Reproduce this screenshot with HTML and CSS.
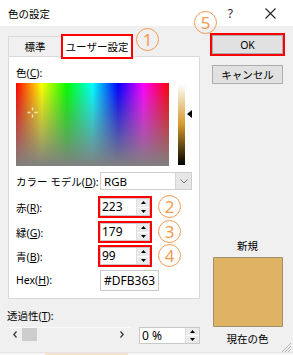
FILE: index.html
```html
<!DOCTYPE html>
<html lang="ja">
<head>
<meta charset="utf-8">
<link rel="stylesheet" href="styles.css">
</head>
<body>
<div class="window">
  <header class="titlebar">
    <span class="title">色の設定</span>
    <span class="help">?</span>
    <svg class="close" width="11" height="11" viewBox="0 0 11 11"><path d="M0.5 0.5L10.5 10.5M10.5 0.5L0.5 10.5" stroke="#222" stroke-width="1.1" fill="none"/></svg>
  </header>
  <div class="main">
    <div class="left">
      <div class="tabs">
        <div class="tab">標準</div>
        <div class="tab active">ユーザー設定<span class="mark mark1">1</span></div>
      </div>
      <div class="panel">
        <div class="lbl-color">色(<u>C</u>):</div>
        <div class="picker">
          <div class="spectrum">
            <svg class="cross" width="11" height="11" viewBox="0 0 11 11"><path d="M5.5 0.5V3.5M5.5 7.5V10.5M0.5 5.5H3.5M7.5 5.5H10.5" stroke="#fbe9c9" stroke-width="1.4" fill="none"/></svg>
          </div>
          <div class="lum"></div>
          <svg class="lum-arrow" width="5" height="8" viewBox="0 0 5 8"><path d="M0 4L5 0V8Z" fill="#000"/></svg>
        </div>
        <div class="fields">
          <div class="row row-select">
            <span class="lbl">カラー モデル(<u>D</u>):</span>
            <div class="select"><span class="sel-val">RGB</span><span class="drop"><svg width="8" height="5" viewBox="0 0 8 5"><path d="M0.5 0.5L4 4L7.5 0.5" stroke="#777" fill="none"/></svg></span></div>
          </div>
          <div class="row row-r">
            <span class="lbl">赤(<u>R</u>):</span>
            <div class="spin boxed"><span class="val">223</span><span class="arrows"><span class="up"><svg width="5" height="3" viewBox="0 0 5 3"><path d="M2.5 0L5 3H0Z" fill="#000"/></svg></span><span class="down"><svg width="5" height="3" viewBox="0 0 5 3"><path d="M0 0H5L2.5 3Z" fill="#000"/></svg></span></span></div>
            <span class="mark mark-row">2</span>
          </div>
          <div class="row row-g">
            <span class="lbl">緑(<u>G</u>):</span>
            <div class="spin boxed"><span class="val">179</span><span class="arrows"><span class="up"><svg width="5" height="3" viewBox="0 0 5 3"><path d="M2.5 0L5 3H0Z" fill="#000"/></svg></span><span class="down"><svg width="5" height="3" viewBox="0 0 5 3"><path d="M0 0H5L2.5 3Z" fill="#000"/></svg></span></span></div>
            <span class="mark mark-row">3</span>
          </div>
          <div class="row row-b">
            <span class="lbl">青(<u>B</u>):</span>
            <div class="spin boxed"><span class="val">99</span><span class="arrows"><span class="up"><svg width="5" height="3" viewBox="0 0 5 3"><path d="M2.5 0L5 3H0Z" fill="#000"/></svg></span><span class="down"><svg width="5" height="3" viewBox="0 0 5 3"><path d="M0 0H5L2.5 3Z" fill="#000"/></svg></span></span></div>
            <span class="mark mark-row">4</span>
          </div>
          <div class="row row-hex">
            <span class="lbl">Hex(<u>H</u>):</span>
            <div class="hex">#DFB363</div>
          </div>
        </div>
      </div>
      <div class="trans">
        <div class="lbl-trans">透過性(<u>T</u>):</div>
        <div class="trans-row">
          <div class="slider">
            <svg class="chev" width="4" height="7" viewBox="0 0 4 7"><path d="M3.5 0.5L0.8 3.5L3.5 6.5" stroke="#333" stroke-width="1.3" fill="none"/></svg>
            <span class="thumb"></span>
            <svg class="chev chev-r" width="4" height="7" viewBox="0 0 4 7"><path d="M0.5 0.5L3.2 3.5L0.5 6.5" stroke="#333" stroke-width="1.3" fill="none"/></svg>
          </div>
          <div class="pct"><span class="val">0 %</span><span class="arrows"><span class="up"><svg width="5" height="3" viewBox="0 0 5 3"><path d="M2.5 0L5 3H0Z" fill="#000"/></svg></span><span class="down"><svg width="5" height="3" viewBox="0 0 5 3"><path d="M0 0H5L2.5 3Z" fill="#000"/></svg></span></span></div>
        </div>
      </div>
    </div>
    <div class="right">
      <div class="btn ok">OK<span class="mark mark5">5</span></div>
      <div class="btn cancel">キャンセル</div>
      <div class="new-lbl">新規</div>
      <div class="swatch"></div>
      <div class="cur-lbl">現在の色</div>
    </div>
  </div>
  <div class="footer"><span class="footer-seg"></span></div>
  <svg class="grip" width="10" height="10" viewBox="0 0 10 10"><path d="M9 3L3 9M9 6L6 9M9 0L0 9" stroke="#b5b5b5" stroke-width="1" fill="none"/></svg>
</div>
</body>
</html>
```

FILE: styles.css
```css
* { box-sizing: border-box; margin: 0; padding: 0; }
html, body { width: 293px; height: 355px; overflow: hidden; }
body {
  background: #f0f0f0;
  font-family: "Noto Sans", "Noto Sans CJK JP", sans-serif;
  font-size: 10.5px;
  color: #000;
}
u { text-decoration: underline; text-underline-offset: 1px; }

.window { position: relative; width: 293px; height: 355px; display: flex; flex-direction: column; }

.titlebar { height: 26px; background: #fff; display: flex; align-items: center; padding-left: 8px; flex: none; }
.title { flex: 1; font-size: 10.5px; }
.help { font-size: 12px; color: #222; margin-right: 32px; }
.close { margin-right: 17px; }

.main { flex: 1; display: flex; }

.left { width: 192px; margin-left: 8px; margin-top: 9px; display: flex; flex-direction: column; }

.tabs { display: flex; align-items: flex-end; height: 21px; position: relative; z-index: 2; }
.tab {
  height: 20px; width: 54px;
  border: 1px solid #d9d9d9; border-bottom: none;
  background: #f0f0f0;
  display: flex; align-items: center; justify-content: center;
  font-size: 10.5px;
}
.tab.active {
  position: relative;
  width: 70px; height: 22px; margin-bottom: -1px;
  background: #fff;
}
.tab.active::after {
  content: "";
  position: absolute; left: -2px; right: -2px; top: -2px; bottom: -2px;
  border: 2px solid #f00;
}

.mark {
  position: absolute;
  width: 23px; height: 23px;
  border: 1.4px solid #f29a52;
  border-radius: 50%;
  display: flex; align-items: center; justify-content: center;
  font-family: "Noto Sans", sans-serif;
  font-size: 17px; line-height: 17px;
  color: #f29a52;
  font-weight: 400;
  padding-bottom: 1px;
}
.mark1 { left: 73px; top: -8px; }
.mark-row { left: 142px; top: -3px; }
.mark5 { left: -19px; top: -25px; }

.panel {
  height: 243px;
  border: 1px solid #d9d9d9;
  background: #fff;
  padding: 8px 0 0 7px;
}
.lbl-color { height: 16px; line-height: 16px; }

.picker { display: flex; margin-top: 2px; align-items: flex-start; }
.spectrum {
  position: relative;
  width: 153px; height: 83px;
  background:
    linear-gradient(to bottom, rgba(128,128,128,0), rgb(128,128,128)),
    linear-gradient(to right, #f00, #ff0 16.7%, #0f0 33.3%, #0ff 50%, #00f 66.7%, #f0f 83.3%, #f00);
}
.cross { position: absolute; left: 11px; top: 24px; }
.lum {
  width: 7px; height: 81px; margin-left: 9px; margin-top: 1px;
  background: linear-gradient(to bottom, #fff 0%, #dfb363 37%, #d49a2b 50%, #000 100%);
}
.lum-arrow { margin-left: 2px; margin-top: 27px; }

.fields { margin-top: 6px; }
.row { position: relative; display: flex; align-items: center; height: 18px; }
.lbl { width: 84px; flex: none; }
.row-r { margin-top: 8px; }
.row-g { margin-top: 7px; }
.row-b { margin-top: 6px; }
.row-hex { margin-top: 5px; height: 20px; }

.select {
  width: 92px; height: 18px;
  border: 1px solid #cfcfcf;
  display: flex; align-items: center;
  background: #fff;
}
.sel-val { flex: 1; padding-left: 3px; font-size: 11.5px; }
.drop { width: 16px; height: 100%; background: #e6e6e6; border-left: 1px solid #d5d5d5; display: flex; align-items: center; justify-content: center; }

.spin {
  width: 50px; height: 18px;
  border: 1px solid #c9c9c9;
  background: #fff;
  display: flex;
}
.boxed { outline: 2px solid #f00; }
.val { flex: 1; padding-left: 1px; font-size: 12px; line-height: 16px; }
.arrows { width: 13px; display: flex; flex-direction: column; border-left: 1px solid #e0e0e0; }
.arrows .up, .arrows .down { flex: 1; background: #ebebeb; display: flex; align-items: center; justify-content: center; }
.arrows .up { border-bottom: 1px solid #fff; }

.hex {
  width: 59px; height: 21px;
  border: 1px solid #c9c9c9;
  padding-left: 3px;
  font-size: 12px; line-height: 19px;
  background: #fff;
}

.trans { margin-left: -1px; }
.lbl-trans { margin-top: 9px; height: 16px; line-height: 16px; }
.trans-row { display: flex; margin-top: 3px; align-items: flex-start; }
.slider {
  width: 123px; height: 14px;
  display: flex; align-items: center;
  border-top: 1px solid #fafafa;
}
.chev { margin-left: 6px; }
.thumb { width: 15px; height: 13px; background: #cdcdcd; margin-left: 5px; }
.chev-r { margin-left: 83px; }
.pct {
  margin-left: 9px;
  width: 61px; height: 17px;
  border: 1px solid #c9c9c9;
  background: #fff;
  display: flex;
}
.pct .val { padding-left: 2px; line-height: 15px; }
.pct .arrows { width: 14px; }

.right { margin-left: 12px; margin-top: 9px; width: 72px; display: flex; flex-direction: column; }
.btn {
  position: relative;
  width: 71px; height: 19px;
  background: #e1e1e1;
  border: 1px solid #adadad;
  display: flex; align-items: center; justify-content: center;
  font-size: 10.5px;
}
.ok { outline: 2px solid #f00; }
.cancel { margin-top: 11px; }
.new-lbl { margin-top: 154px; height: 16px; line-height: 16px; text-align: center; width: 71px; }
.swatch { margin-top: 3px; margin-left: 1px; width: 70px; height: 70px; background: #dfb363; border: 1px solid #a09070; }
.cur-lbl { margin-top: 4px; height: 16px; line-height: 16px; text-align: center; width: 71px; }

.footer { height: 3px; flex: none; border-top: 1px solid #e4e4e4; background: #f7f7f7; display: flex; }
.footer-seg { margin-left: 45px; width: 83px; background: #f7e2cc; }

.grip { position: absolute; right: 1px; bottom: 2px; }
```
